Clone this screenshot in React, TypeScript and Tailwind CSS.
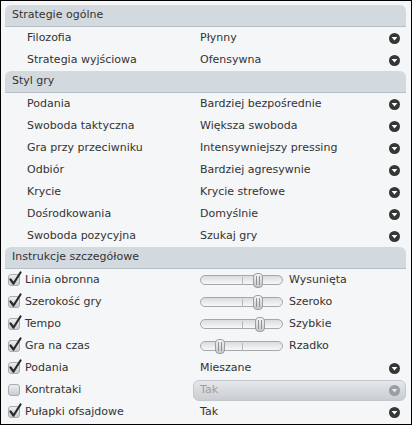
import React from "react";

const font = { fontFamily: '"DejaVu Sans", Verdana, sans-serif' };

function Arrow({ disabled = false }: { disabled?: boolean }) {
  return (
    <svg width="11" height="11" viewBox="0 0 11 11" className="shrink-0">
      <circle cx="5.5" cy="5.5" r="5.5" fill={disabled ? "#9b9ea1" : "#363636"} />
      <polygon points="2.6,3.9 8.4,3.9 5.5,7.6" fill={disabled ? "#e6e7e8" : "#ffffff"} />
    </svg>
  );
}

function Header({ title }: { title: string }) {
  return (
    <div className="h-[22px] flex items-center pl-[7px] rounded-t-[6px] bg-[#d3dadf] border-b border-[#b7bfc6] text-[11px] text-[#333333]">
      {title}
    </div>
  );
}

function Row({ label, value }: { label: string; value: string }) {
  return (
    <div className="h-[22px] flex items-center text-[11px] text-[#333333]">
      <div className="w-[195px] pl-[22px]">{label}</div>
      <div className="flex-1">{value}</div>
      <div className="pr-[6px] flex items-center">
        <Arrow />
      </div>
    </div>
  );
}

function Check({ checked }: { checked: boolean }) {
  return (
    <div className="relative w-[12px] h-[12px] ml-[3px] mr-[5px] shrink-0 rounded-[3px] border border-[#a9adb1] bg-gradient-to-b from-[#eceef0] to-[#c9cdd1]">
      {checked && (
        <svg width="15" height="15" viewBox="0 0 15 15" className="absolute left-[-1px] top-[-4px]">
          <path d="M2.5 8.5 L5.5 12.5 L12.5 1.5" stroke="#2a2a2a" strokeWidth="2.2" fill="none" strokeLinejoin="round" strokeLinecap="round" />
        </svg>
      )}
    </div>
  );
}

function Slider({ pos }: { pos: number }) {
  return (
    <div className="relative w-[83px] h-[15px] flex items-center shrink-0">
      <div className="w-full h-[10px] rounded-full border border-[#a4a8ac] bg-gradient-to-b from-[#d9dcdf] to-[#f7f8f9]" />
      <div className="absolute left-[42px] top-[4px] w-px h-[8px] bg-[#b5b9bd]" />
      <div
        className="absolute top-0 w-[10px] h-[15px] rounded-[4px] border border-[#9a9ea2] bg-gradient-to-b from-[#f4f5f6] to-[#c5c9cd] flex items-center justify-center gap-[2px]"
        style={{ left: pos - 5 }}
      >
        <div className="w-px h-[9px] bg-[#8f9397]" />
        <div className="w-px h-[9px] bg-[#8f9397]" />
      </div>
    </div>
  );
}

function CheckRow({
  label,
  checked,
  children,
}: {
  label: string;
  checked: boolean;
  children: React.ReactNode;
}) {
  return (
    <div className="h-[22px] flex items-center text-[11px] text-[#333333]">
      <div className="w-[195px] flex items-center">
        <Check checked={checked} />
        <span>{label}</span>
      </div>
      {children}
    </div>
  );
}

function SliderRow({ label, pos, value }: { label: string; pos: number; value: string }) {
  return (
    <CheckRow label={label} checked>
      <Slider pos={pos} />
      <span className="ml-[6px]">{value}</span>
    </CheckRow>
  );
}

export default function App() {
  return (
    <div style={font} className="w-[412px] h-[425px] border border-black bg-[#f5f6f7] pt-[4px] pl-[4px] pr-[5px] overflow-hidden">
      <Header title="Strategie ogólne" />
      <Row label="Filozofia" value="Płynny" />
      <Row label="Strategia wyjściowa" value="Ofensywna" />
      <Header title="Styl gry" />
      <Row label="Podania" value="Bardziej bezpośrednie" />
      <Row label="Swoboda taktyczna" value="Większa swoboda" />
      <Row label="Gra przy przeciwniku" value="Intensywniejszy pressing" />
      <Row label="Odbiór" value="Bardziej agresywnie" />
      <Row label="Krycie" value="Krycie strefowe" />
      <Row label="Dośrodkowania" value="Domyślnie" />
      <Row label="Swoboda pozycyjna" value="Szukaj gry" />
      <Header title="Instrukcje szczegółowe" />
      <SliderRow label="Linia obronna" pos={58} value="Wysunięta" />
      <SliderRow label="Szerokość gry" pos={58} value="Szeroko" />
      <SliderRow label="Tempo" pos={60} value="Szybkie" />
      <SliderRow label="Gra na czas" pos={20} value="Rzadko" />
      <CheckRow label="Podania" checked>
        <span className="flex-1">Mieszane</span>
        <div className="pr-[6px] flex items-center">
          <Arrow />
        </div>
      </CheckRow>
      <CheckRow label="Kontrataki" checked={false}>
        <div className="ml-[-7px] flex-1 h-[21px] rounded-[6px] border border-[#c3c7cb] bg-gradient-to-b from-[#e6e8ea] to-[#c9cdd1] flex items-center pl-[6px] pr-[5px] text-[#9a9da0]">
          <span className="flex-1">Tak</span>
          <Arrow disabled />
        </div>
      </CheckRow>
      <CheckRow label="Pułapki ofsajdowe" checked>
        <span className="flex-1">Tak</span>
        <div className="pr-[6px] flex items-center">
          <Arrow />
        </div>
      </CheckRow>
    </div>
  );
}
